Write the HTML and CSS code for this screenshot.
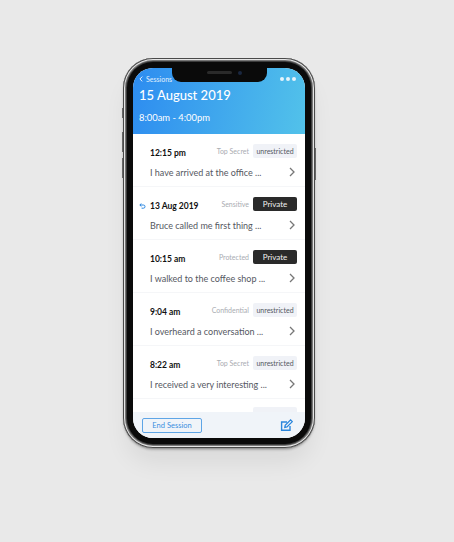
FILE: index.html
```html
<!DOCTYPE html>
<html lang="en">
<head>
<meta charset="utf-8">
<title>Sessions</title>
<link rel="stylesheet" href="styles.css">
</head>
<body>
<div class="phone">
  <span class="btn btn-l1"></span><span class="btn btn-l2"></span><span class="btn btn-l3"></span><span class="btn btn-r"></span>
  <div class="bezel">
    <div class="screen">
      <div class="notch"><span class="speaker"></span><span class="camera"></span></div>
      <header class="head">
        <div class="topbar">
          <span class="back"><svg width="4" height="6" viewBox="0 0 4 6"><path d="M3.3.6.9 3l2.4 2.4" fill="none" stroke="#fff" stroke-width="1"/></svg>Sessions</span>
          <span class="dots"><i></i><i></i><i></i></span>
        </div>
        <h1>15 August 2019</h1>
        <p>8:00am - 4:00pm</p>
      </header>
      <main class="list">
        <div class="row">
          <div class="line"><b>12:15 pm</b><span class="level">Top Secret</span><span class="tag">unrestricted</span></div>
          <div class="line2"><span>I have arrived at the office ...</span><svg class="chev" width="6" height="10" viewBox="0 0 6 10"><path d="M1 1l4 4-4 4" fill="none" stroke="#777" stroke-width="1.3"/></svg></div>
        </div>
        <div class="row">
          <div class="line"><svg class="undo" width="7" height="6" viewBox="0 0 7 6"><path d="M2.4.5.8 2l1.6 1.5M1 2h3.4a1.5 1.5 0 0 1 0 3.2H2.6" fill="none" stroke="#2a86e0" stroke-width="1"/></svg><b>13 Aug 2019</b><span class="level">Sensitive</span><span class="tag dark">Private</span></div>
          <div class="line2"><span>Bruce called me first thing ...</span><svg class="chev" width="6" height="10" viewBox="0 0 6 10"><path d="M1 1l4 4-4 4" fill="none" stroke="#777" stroke-width="1.3"/></svg></div>
        </div>
        <div class="row">
          <div class="line"><b>10:15 am</b><span class="level">Protected</span><span class="tag dark">Private</span></div>
          <div class="line2"><span>I walked to the coffee shop ...</span><svg class="chev" width="6" height="10" viewBox="0 0 6 10"><path d="M1 1l4 4-4 4" fill="none" stroke="#777" stroke-width="1.3"/></svg></div>
        </div>
        <div class="row">
          <div class="line"><b>9:04 am</b><span class="level">Confidential</span><span class="tag">unrestricted</span></div>
          <div class="line2"><span>I overheard a conversation ...</span><svg class="chev" width="6" height="10" viewBox="0 0 6 10"><path d="M1 1l4 4-4 4" fill="none" stroke="#777" stroke-width="1.3"/></svg></div>
        </div>
        <div class="row">
          <div class="line"><b>8:22 am</b><span class="level">Top Secret</span><span class="tag">unrestricted</span></div>
          <div class="line2"><span>I received a very interesting ...</span><svg class="chev" width="6" height="10" viewBox="0 0 6 10"><path d="M1 1l4 4-4 4" fill="none" stroke="#777" stroke-width="1.3"/></svg></div>
        </div>
        <div class="peek"><span class="tag empty"></span></div>
      </main>
      <footer class="foot">
        <span class="end">End Session</span>
        <svg width="13" height="13" viewBox="0 0 13 13"><path d="M10 7v4.2H1.6V3H7" fill="none" stroke="#2b86dc" stroke-width="1.4"/><path d="M4.8 8.4l.4-2.2L10.6.9l1.7 1.7-5.3 5.4z" fill="none" stroke="#2b86dc" stroke-width="1.3"/></svg>
      </footer>
    </div>
  </div>
</div>
</body>
</html>
```
FILE: styles.css
```css
* { box-sizing: border-box; }
html, body { height: 100%; }
body {
  margin: 0;
  background: #e9e9e9;
  font-family: Lato, "Open Sans", "Liberation Sans", sans-serif;
  overflow: hidden;
}
.phone {
  position: relative;
  width: 192px;
  height: 390px;
  margin: 58px 0 0 123px;
  border-radius: 30px;
  background: #3c3c3c;
  padding: 4px;
  box-shadow:
    inset 0 0 0 1px #4a4a4a,
    inset 0 0 0 2px #e6e6e6,
    inset 0 0 0 3px #777,
    0 2px 3px -1px rgba(0, 0, 0, .45),
    0 18px 24px -4px rgba(0, 0, 0, .07);
}
.btn { position: absolute; width: 1px; background: #666; }
.btn-l1 { left: -1px; top: 50px; height: 10px; }
.btn-l2 { left: -1px; top: 74px; height: 20px; }
.btn-l3 { left: -1px; top: 100px; height: 20px; }
.btn-r { right: -1px; top: 90px; height: 32px; }
.bezel {
  height: 100%;
  border-radius: 26px;
  background: #0a0a0a;
  padding: 6px;
}
.screen {
  position: relative;
  height: 100%;
  border-radius: 20px;
  overflow: hidden;
  background: #fff;
  display: flex;
  flex-direction: column;
}
.notch {
  position: absolute;
  top: 0;
  left: 39px;
  width: 95px;
  height: 14px;
  padding: 0 0 5px 10px;
  background: #0a0a0a;
  border-radius: 0 0 9px 9px;
  display: flex;
  align-items: center;
  justify-content: center;
  gap: 6px;
}
.speaker { width: 25px; height: 3px; border-radius: 2px; background: #2a2a2a; }
.camera { width: 4px; height: 4px; border-radius: 50%; background: #1a2740; }
.head {
  height: 66px;
  flex: none;
  background: linear-gradient(100deg, #2d8cf0, #52c2ea);
  color: #fff;
  padding: 5px 6px 0 6px;
}
.topbar { display: flex; justify-content: space-between; align-items: center; height: 11px; }
.back { display: flex; align-items: center; gap: 3px; font-size: 7px; opacity: .85; }
.dots { display: flex; gap: 2px; margin-right: 3px; }
.dots i { width: 4px; height: 4px; border-radius: 50%; background: #e6f4fb; }
.head h1 { margin: 1px 0 0; font-size: 13px; line-height: 20px; font-weight: 500; }
.head p { margin: 6px 0 0; font-size: 9.4px; line-height: 14px; }
.list { flex: 1; overflow: hidden; }
.row {
  height: 53px;
  padding: 6px 8px 0 17px;
  border-bottom: 1px solid #f5f6f8;
}
.line { position: relative; display: flex; align-items: center; height: 23px; }
.line b { font-size: 8.5px; font-weight: 700; color: #111; margin-top: 3px; margin-right: auto; }
.undo { position: absolute; left: -11px; top: 10px; }
.level { font-size: 7px; color: #a9acb2; margin: -1px 4px 0 0; }
.tag {
  width: 44px;
  height: 14px;
  margin-top: -1px;
  border-radius: 2px;
  background: #f0f2f7;
  color: #55585f;
  font-size: 7px;
  line-height: 14px;
  text-align: center;
}
.tag.dark { background: #2a2a2a; color: #f0f0f0; font-size: 8px; }
.line2 {
  display: flex;
  justify-content: space-between;
  align-items: center;
  height: 14px;
  margin-top: 2px;
  padding-right: 2px;
  font-size: 9px;
  color: #55585f;
}
.peek { padding: 8px 8px 0 0; display: flex; justify-content: flex-end; }
.tag.empty { display: block; margin: 0; }
.foot {
  flex: none;
  height: 26px;
  background: #f0f4f9;
  display: flex;
  align-items: center;
  justify-content: space-between;
  padding: 0 12px 0 9px;
}
.end {
  width: 60px;
  height: 15px;
  border: 1px solid #5ea5e6;
  border-radius: 2px;
  color: #3a8fdf;
  font-size: 7.5px;
  line-height: 13px;
  text-align: center;
}
```
